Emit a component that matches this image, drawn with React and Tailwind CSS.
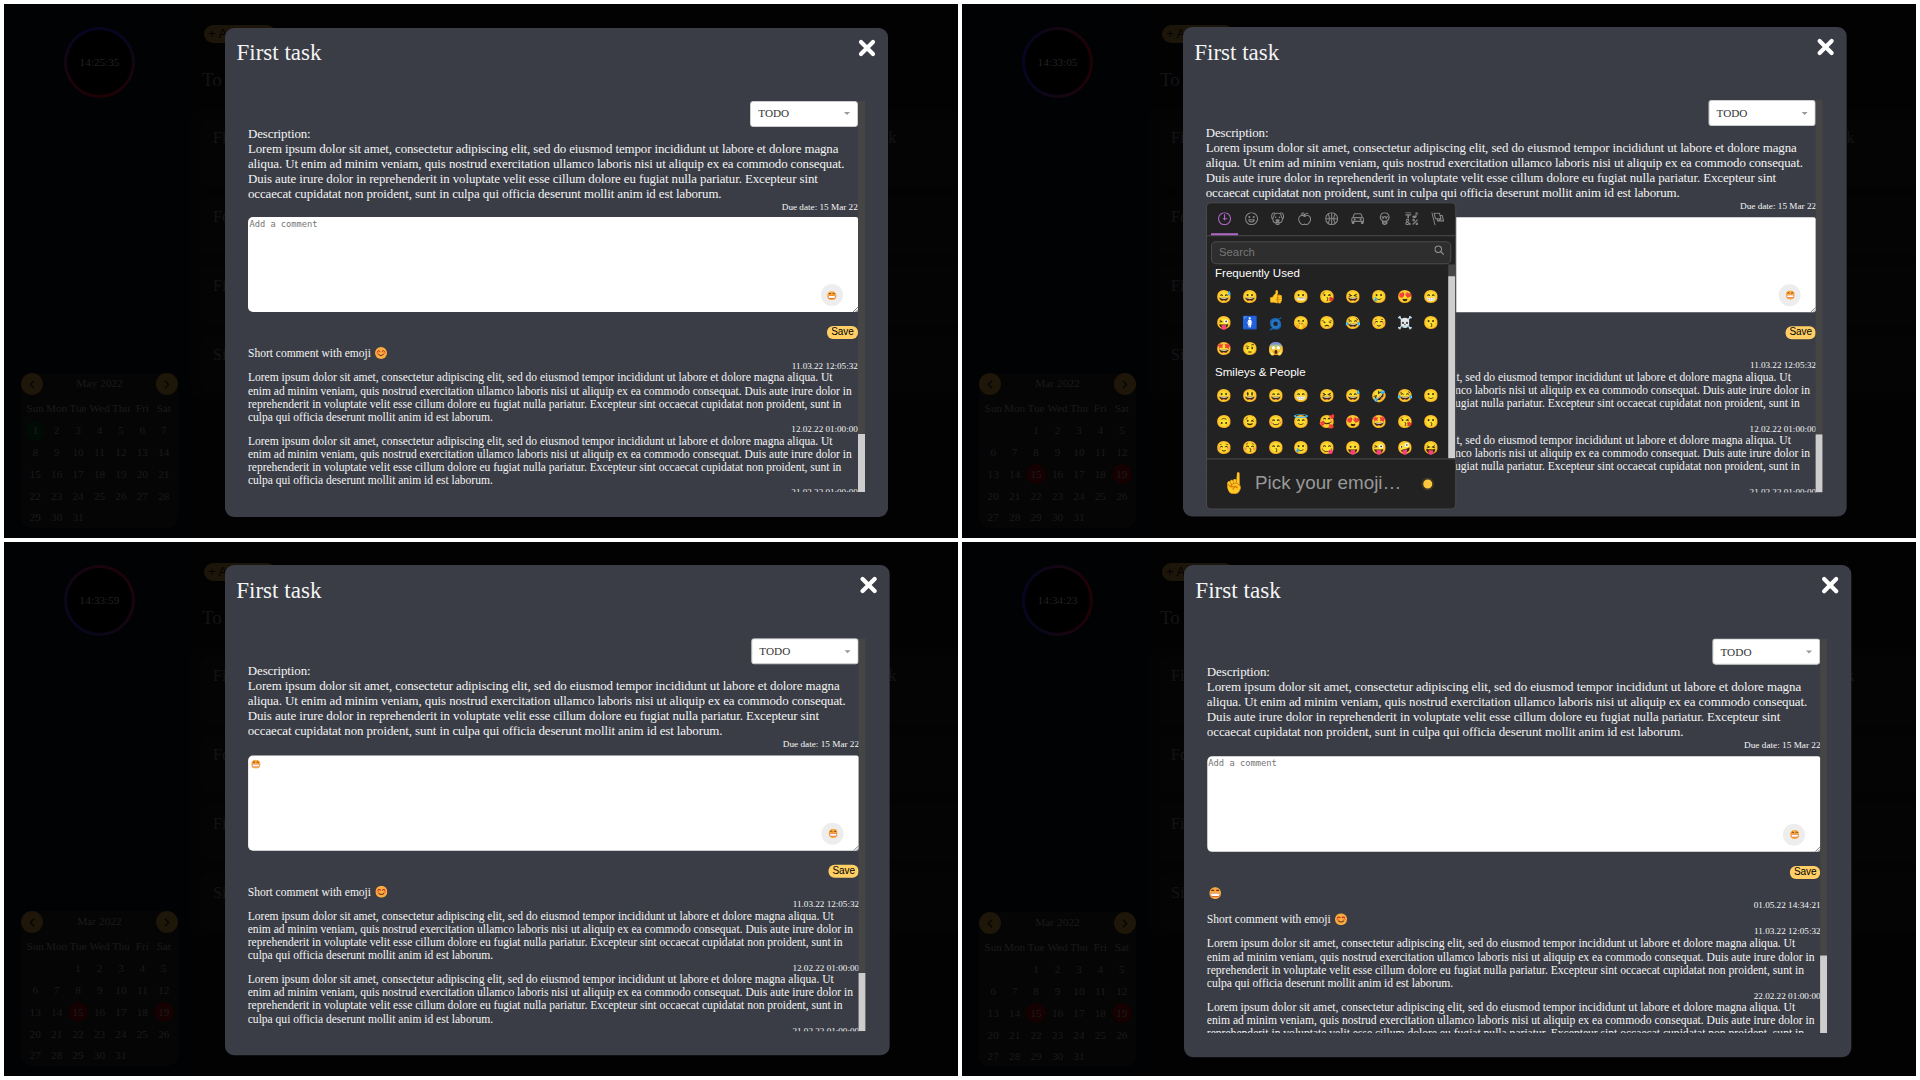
const LOREM_WIDE = `Lorem ipsum dolor sit amet, consectetur adipiscing elit, sed do eiusmod tempor incididunt ut labore et dolore magna
aliqua. Ut enim ad minim veniam, quis nostrud exercitation ullamco laboris nisi ut aliquip ex ea commodo consequat.
Duis aute irure dolor in reprehenderit in voluptate velit esse cillum dolore eu fugiat nulla pariatur. Excepteur sint
occaecat cupidatat non proident, sunt in culpa qui officia deserunt mollit anim id est laborum.`;

const LOREM_SMALL = `Lorem ipsum dolor sit amet, consectetur adipiscing elit, sed do eiusmod tempor incididunt ut labore et dolore magna aliqua. Ut
enim ad minim veniam, quis nostrud exercitation ullamco laboris nisi ut aliquip ex ea commodo consequat. Duis aute irure dolor in
reprehenderit in voluptate velit esse cillum dolore eu fugiat nulla pariatur. Excepteur sint occaecat cupidatat non proident, sunt in
culpa qui officia deserunt mollit anim id est laborum.`;

const FREQUENT = ["😅", "😀", "👍", "😬", "😘", "😆", "🥲", "😍", "😁", "😜", "🚺", "🌀", "🤫", "😒", "😂", "☺️", "☠️", "😗", "🤩", "🤨", "😱"];
const SMILEYS = ["😀", "😃", "😄", "😁", "😆", "😅", "🤣", "😂", "🙂", "🙃", "😉", "😊", "😇", "🥰", "😍", "🤩", "😘", "😗", "☺️", "😚", "😙", "🥲", "😋", "😛", "😜", "🤪", "😝"];

const TAB_ICONS = [
  ["M13 4h-2l-.001 7H9v2h2v2h2v-2h4v-2h-4z", "M12 0C5.373 0 0 5.373 0 12s5.373 12 12 12 12-5.373 12-12S18.627 0 12 0m0 22C6.486 22 2 17.514 2 12S6.486 2 12 2s10 4.486 10 10-4.486 10-10 10"],
  ["M12 0C5.373 0 0 5.373 0 12s5.373 12 12 12 12-5.373 12-12S18.627 0 12 0m0 22C6.486 22 2 17.514 2 12S6.486 2 12 2s10 4.486 10 10-4.486 10-10 10", "M8 7a2 2 0 1 0-.001 3.999A2 2 0 0 0 8 7M16 7a2 2 0 1 0-.001 3.999A2 2 0 0 0 16 7M15.232 15c-.693 1.195-1.87 2-3.349 2-1.477 0-2.655-.805-3.347-2H15m3-2H6a6 6 0 1 0 12 0"],
  ["M15.5 8a1.5 1.5 0 1 0 .001 3.001A1.5 1.5 0 0 0 15.5 8M8.5 8a1.5 1.5 0 1 0 .001 3.001A1.5 1.5 0 0 0 8.5 8", "M18.933 0h-.027c-.97 0-2.138.787-3.018 1.497-1.274-.374-2.612-.51-3.887-.51-1.285 0-2.616.133-3.874.517C7.245.79 6.069 0 5.093 0h-.027C3.352 0 .07 2.67.002 7.026c-.039 2.479.276 4.238 1.04 5.013.254.258.882.677 1.295.882.191 3.177.922 5.238 2.536 6.38.897.637 2.187.949 3.2 1.102C8.04 20.6 8 20.795 8 21c0 1.773 2.35 3 4 3 1.648 0 4-1.227 4-3 0-.201-.038-.393-.072-.586 2.573-.385 5.435-1.877 5.925-7.587.396-.22.887-.568 1.104-.788.763-.774 1.079-2.534 1.04-5.013C23.929 2.67 20.646 0 18.933 0M3.223 9.135c-.237.281-.837 1.155-.884 1.238-.15-.41-.368-1.349-.337-3.291.051-3.281 2.478-4.972 3.091-5.031.256.015.731.27 1.265.646-1.11 1.171-2.275 2.915-2.352 5.125-.133.546-.398.858-.783 1.313M12 22c-.901 0-1.954-.693-2-1 0-.654.475-1.236 1-1.602V20a1 1 0 1 0 2 0v-.602c.524.365 1 .947 1 1.602-.046.307-1.099 1-2 1m3-3.48v.02a4.752 4.752 0 0 0-1.262-1.02c1.092-.516 2.239-1.334 2.239-2.217 0-1.842-1.781-2.195-3.977-2.195-2.196 0-3.978.354-3.978 2.195 0 .883 1.148 1.701 2.238 2.217A4.8 4.8 0 0 0 9 18.539v-.025c-1-.076-2.182-.281-2.973-.842-1.301-.92-1.838-3.045-1.853-6.478l.023-.041c.496-.826 1.49-1.45 1.804-3.102 0-2.047 1.357-3.631 2.362-4.522C9.37 3.178 10.555 3 11.948 3c1.447 0 2.685.192 3.733.57 1 .9 2.316 2.465 2.316 4.48.313 1.651 1.307 2.275 1.803 3.102.035.058.068.117.102.178-.059 5.967-1.949 7.01-4.902 7.19m6.628-8.202c-.037-.065-.074-.13-.113-.195a7.587 7.587 0 0 0-.739-.987c-.385-.455-.648-.768-.782-1.313-.076-2.209-1.241-3.954-2.353-5.124.531-.376 1.004-.63 1.261-.647.636.071 3.044 1.764 3.096 5.031.027 1.81-.347 3.218-.37 3.235"],
  ["M17 4.978c-1.838 0-2.876.396-3.68.934.513-1.172 1.768-2.934 4.68-2.934a1 1 0 0 0 0-2c-2.921 0-4.629 1.365-5.547 2.512-.064.078-.119.162-.18.244C11.73 1.838 10.798.023 9.207.023 8.579.022 7.85.306 7 .978 5.027 2.54 5.329 3.902 6.492 4.999 3.609 5.222 0 7.352 0 12.969c0 4.582 4.961 11.009 9 11.009 1.975 0 2.371-.486 3-1 .629.514 1.025 1 3 1 4.039 0 9-6.418 9-11 0-5.953-4.055-8-7-8M8.242 2.546c.641-.508.943-.523.965-.523.426.169.975 1.405 1.357 3.055-1.527-.629-2.741-1.352-2.98-1.846.059-.112.241-.356.658-.686M15 21.978c-1.08 0-1.21-.109-1.559-.402l-.176-.146c-.367-.302-.816-.452-1.266-.452s-.898.15-1.266.452l-.176.146c-.347.292-.477.402-1.557.402-2.813 0-7-5.389-7-9.009 0-5.823 4.488-5.991 5-5.991 1.939 0 2.484.471 3.387 1.251l.323.276a1.995 1.995 0 0 0 2.58 0l.323-.276c.902-.78 1.447-1.251 3.387-1.251.512 0 5 .168 5 6 0 3.617-4.187 9-7 9"],
  ["M12 0C5.373 0 0 5.373 0 12s5.373 12 12 12 12-5.373 12-12S18.627 0 12 0m9.949 11H17.05c.224-2.527 1.232-4.773 1.968-6.113A9.966 9.966 0 0 1 21.949 11M13 11V2.051a9.945 9.945 0 0 1 4.432 1.564c-.858 1.491-2.156 4.22-2.392 7.385H13zm-2 0H8.961c-.238-3.165-1.536-5.894-2.393-7.385A9.95 9.95 0 0 1 11 2.051V11zm0 2v8.949a9.937 9.937 0 0 1-4.432-1.564c.857-1.492 2.155-4.221 2.393-7.385H11zm4.04 0c.236 3.164 1.534 5.893 2.392 7.385A9.92 9.92 0 0 1 13 21.949V13h2.04zM4.982 4.887C5.718 6.227 6.726 8.473 6.951 11h-4.9a9.977 9.977 0 0 1 2.931-6.113M2.051 13h4.9c-.226 2.527-1.233 4.771-1.969 6.113A9.972 9.972 0 0 1 2.051 13m16.967 6.113c-.735-1.342-1.744-3.586-1.968-6.113h4.899a9.961 9.961 0 0 1-2.931 6.113"],
  ["M6.5 11.5a2 2 0 1 0 0 4 2 2 0 0 0 0-4M17.5 11.5a2 2 0 1 0 0 4 2 2 0 0 0 0-4", "M21.5 9.2 19.6 3.8C19.2 2.7 18.2 2 17 2H7C5.800 2 4.800 2.700 4.400 3.800L2.500 9.200C1 9.700 0 11 0 12.500V18h1v2.500a1.500 1.500 0 0 0 1.500 1.500h2A1.500 1.500 0 0 0 6 20.500V18h12v2.500a1.500 1.500 0 0 0 1.500 1.500h2a1.500 1.500 0 0 0 1.500-1.500V18h1v-5.500c0-1.500-1-2.800-2.500-3.300M6.300 4.500C6.400 4.200 6.700 4 7 4h10c.3 0 .6.200.7.500L19.200 9H4.800zM22 16H2v-3.500C2 11.700 2.700 11 3.500 11h17c.8 0 1.500.7 1.500 1.500z"],
  ["M12 0a9 9 0 0 0-5 16.482V21s2.035 3 5 3 5-3 5-3v-4.518A9 9 0 0 0 12 0zm0 2c3.86 0 7 3.141 7 7s-3.14 7-7 7-7-3.141-7-7 3.14-7 7-7zM9 17.477c.94.332 1.946.523 3 .523s2.06-.19 3-.523v.834c-.91.436-1.925.689-3 .689a6.924 6.924 0 0 1-3-.69v-.833zm.236 3.07A8.854 8.854 0 0 0 12 21c.965 0 1.888-.167 2.758-.451C14.155 21.173 13.153 22 12 22c-1.102 0-2.117-.789-2.764-1.453z", "M14.745 12.449h-.004c-.852-.024-1.188-.858-1.577-1.824-.421-1.061-.703-1.561-1.182-1.566h-.009c-.481 0-.783.497-1.235 1.537-.436.982-.801 1.811-1.636 1.791l-.276-.043c-.565-.171-.853-.691-1.284-1.794-.125-.313-.202-.632-.27-.913-.051-.213-.127-.53-.195-.634C7.067 9.004 7.039 9 6.99 9A1 1 0 0 1 7 7h.01c1.662.017 2.015 1.373 2.198 2.134.486-.981 1.304-2.058 2.797-2.075 1.531.018 2.28 1.153 2.731 2.141l.002-.008C14.944 8.424 15.327 7 16.979 7h.032A1 1 0 1 1 17 9h-.011c-.149.076-.256.474-.319.709a6.484 6.484 0 0 1-.311.951c-.429.973-.79 1.789-1.614 1.789"],
  ["M0 0h11v2H0zM4 11h3V6h4V4H0v2h4zM15.5 17c1.381 0 2.5-1.116 2.5-2.493s-1.119-2.493-2.5-2.493S13 13.13 13 14.507 14.119 17 15.5 17m0-2.986c.276 0 .5.222.5.493 0 .272-.224.493-.5.493s-.5-.221-.5-.493.224-.493.5-.493M21.5 19.014c-1.381 0-2.5 1.116-2.5 2.493S20.119 24 21.5 24s2.5-1.116 2.5-2.493-1.119-2.493-2.5-2.493m0 2.986a.497.497 0 0 1-.5-.493c0-.271.224-.493.5-.493s.5.222.5.493a.497.497 0 0 1-.5.493M22 13l-9 9 1.513 1.5 8.99-9.009zM17 11c2.209 0 4-1.119 4-2.5V2s.985-.161 1.498.949C23.01 4.055 23 6 23 6s1-1.119 1-3.135C24-.02 21 0 21 0h-2v6.347A5.853 5.853 0 0 0 17 6c-2.209 0-4 1.119-4 2.5s1.791 2.5 4 2.5M10.297 20.482l-1.475-1.585a47.54 47.54 0 0 1-1.442 1.129c-.307-.288-.989-1.016-2.045-2.183.902-.836 1.479-1.466 1.729-1.892s.376-.871.376-1.336c0-.592-.273-1.178-.818-1.759-.546-.581-1.329-.871-2.349-.871-1.008 0-1.79.293-2.344.879-.556.587-.832 1.181-.832 1.784 0 .813.419 1.748 1.256 2.805-.847.614-1.444 1.208-1.794 1.784a3.465 3.465 0 0 0-.523 1.833c0 .857.308 1.56.924 2.107.616.549 1.423.823 2.42.823 1.173 0 2.444-.379 3.813-1.137L8.235 24h2.819l-2.09-2.383 1.333-1.135zm-6.736-6.389a1.02 1.02 0 0 1 .73-.286c.31 0 .559.085.747.254a.849.849 0 0 1 .283.659c0 .518-.419 1.112-1.257 1.784-.536-.651-.805-1.231-.805-1.742a.901.901 0 0 1 .302-.669M3.74 22c-.427 0-.778-.116-1.057-.349-.279-.232-.418-.487-.418-.766 0-.594.509-1.288 1.527-2.083.968 1.134 1.717 1.946 2.248 2.438-.921.507-1.686.76-2.3.76"],
  ["M0 0l6.084 24H8L1.916 0zM21 5h-4l-1-4H4l3 12h3l1 4h13L21 5zM6.563 3h7.875l2 8H8.563l-2-8zm8.832 10l-2.856 1.904L12.063 13h3.332zM19 13l-1.5-6h1.938l2 8H16l3-2z"],
];

function BlushFace({ className }) {
  return (
    <svg viewBox="0 0 24 24" className={className}>
      <circle cx="12" cy="12" r="12" fill="#fbac40" />
      <circle cx="5" cy="12" r="2.400" fill="#f37a3f" />
      <circle cx="19" cy="12" r="2.400" fill="#f37a3f" />
      <path d="M4.500 9.500q3-4.500 6 0M13.500 9.500q3-4.500 6 0" stroke="#b3241c" strokeWidth="2" fill="none" />
      <path d="M6.500 14.500q5.500 6 11 0" stroke="#6b3415" strokeWidth="2" fill="none" />
    </svg>
  );
}

function GrinFace({ className }) {
  return (
    <svg viewBox="0 0 24 24" className={className}>
      <rect x="0.500" y="0.500" width="23" height="23" rx="10.500" fill="#fbaa40" />
      <path d="M4.500 7.500q2.700-3 5.400 0M14.100 7.500q2.700-3 5.400 0" stroke="#6b3415" strokeWidth="2.400" fill="none" />
      <rect x="3.200" y="11.800" width="17.600" height="7.400" rx="3.200" fill="#d4503a" />
      <rect x="3.600" y="12.900" width="16.800" height="5" rx="2.500" fill="#fff" />
    </svg>
  );
}

function Cyclone() {
  return (
    <svg viewBox="0 0 24 24" className="size-[15px]" fill="none" strokeLinecap="round">
      <circle cx="12" cy="12" r="6" stroke="#2478c8" strokeWidth="4.600" />
      <path d="M5 14C2.500 7.500 6 3.500 12.500 3.800M19 10c2.500 6.500-1 10.500-7.500 10.200" stroke="#1966b8" strokeWidth="2.400" />
      <path d="M14 4.200q4 .8 6.500-1.700M10 19.800q-4-.8-6.500 1.700" stroke="#1966b8" strokeWidth="2" />
    </svg>
  );
}

function Clock({ time, ring }) {
  return (
    <div className={`ml-[60px] mt-[22.500px] size-[71px] rounded-full p-[3px] ${ring}`}>
      <div className="flex size-full items-center justify-center rounded-full bg-black text-[11.2px] text-[#222223]">{time}</div>
    </div>
  );
}

function Calendar({ title, blanks, marks, markClass, shift }) {
  const cells = [...Array(blanks).fill(""), ...Array.from({ length: 31 }, (_, i) => i + 1)];
  return (
    <div className={`ml-[17px] h-[155px] w-[157px] rounded-[11px] bg-[#050505] text-[11.200px] text-[#1b1b1b] ${shift}`}>
      <div className="flex h-[22px] items-center justify-between text-[11.4px]">
        {["M14.500 6 8.500 12l6 6", "M9.500 6l6 6-6 6"].map((d, i) => (
          <div key={d} className={`flex size-[22px] items-center justify-center rounded-full bg-[#1d1609] ${i ? "order-3" : "order-1"}`}>
            <svg viewBox="0 0 24 24" className="size-[15px]" fill="none" stroke="#060502" strokeWidth="2"><path d={d} /></svg>
          </div>
        ))}
        <span className="order-2">{title}</span>
      </div>
      <div className="ml-[3.500px] grid w-[150px] grid-cols-7">
        {["Sun", "Mon", "Tue", "Wed", "Thu", "Fri", "Sat"].map((d) => (
          <div key={d} className="flex h-[25px] items-center justify-center pt-[2px]">{d}</div>
        ))}
        {cells.map((c, i) => (
          <div key={i} className="flex h-[21.700px] items-center justify-center">
            <span className={`flex size-[20px] items-center justify-center rounded-full ${marks.includes(c) ? markClass : ""}`}>{c}</span>
          </div>
        ))}
      </div>
    </div>
  );
}

function Backdrop({ time, ring, calendar }) {
  return (
    <div className="flex h-full w-full">
      <div className="flex w-[186px] shrink-0 flex-col justify-between bg-[#010204]">
        <Clock time={time} ring={ring} />
        <div className="pb-[10px]"><Calendar {...calendar} /></div>
      </div>
      <div className="flex grow flex-col bg-[#020203] text-[#141414]">
        <div className="ml-[14px] mt-[20.500px] h-[18px] w-[72px] rounded-full bg-[#1c160a] pl-[4px] font-['Liberation_Sans'] text-[13px] leading-[17px] text-[#030302]">+ Add task</div>
        <div className="ml-[12px] mt-[26px] text-[19px] leading-[22px]">To Do</div>
        <div className="mt-[18px] flex h-[290px] flex-col rounded-[8px] bg-[#030303] pl-[11px] pt-[10px] text-[16px] leading-[20px]">
          {["First task", "Fourth task", "Fifth task", "Sixth task"].map((t, i) => (
            <div key={t} className={`mb-[12px] flex shrink-0 justify-between rounded-l-[6px] bg-[#040404] pl-[12px] pr-[61.500px] pt-[9.500px] ${i ? "h-[56.700px]" : "h-[67.300px]"}`}>
              <span>{t}</span>
              {i === 0 && <span>task</span>}
            </div>
          ))}
        </div>
      </div>
    </div>
  );
}

function Comment({ text, date, emoji }) {
  return (
    <div>
      {emoji ? (
        <div className="flex h-[15.600px] items-center text-[11.500px] leading-[15.600px]">
          {text && <span className="mr-[4.500px] mt-[2px]">{text}</span>}
          {emoji === "blush" ? <BlushFace className="size-[12px]" /> : <GrinFace className="ml-[2px] size-[12px]" />}
        </div>
      ) : (
        <div className="whitespace-pre text-[11.550px] leading-[13.200px] tracking-[-0.018px]">{text}</div>
      )}
      <div className="h-[10.400px] text-right text-[9.100px] leading-[10.400px]">{date}</div>
    </div>
  );
}

function EmojiGrid({ items }) {
  return (
    <div className="grid w-[233px] grid-cols-9">
      {items.map((e, i) => (
        <span key={i} className="flex h-[26px] items-center justify-center font-['Noto_Color_Emoji'] text-[12.700px] leading-none">{e === "🌀" ? <Cyclone /> : e}</span>
      ))}
    </div>
  );
}

function EmojiPicker() {
  return (
    <div className="absolute left-[23px] top-[175px] flex h-[306.500px] w-[250px] flex-col rounded-[5px] border border-[#4b4b4c] bg-[#222] font-['Liberation_Sans']">
      <div className="flex h-[33px] shrink-0 border-b border-[#4b4b4c] px-[4px]">
        {TAB_ICONS.map((paths, i) => (
          <div key={i} className={`flex grow basis-0 items-center justify-center pb-[1px] ${i ? "text-[#858585]" : "border-b-2 border-[#ae65c5] pt-[2px] text-[#ae65c5]"}`}>
            <svg viewBox="0 0 24 24" className="size-[13px]" fill="currentColor">{paths.map((d) => <path key={d} d={d} />)}</svg>
          </div>
        ))}
      </div>
      <div className="mx-[4px] mt-[5px] flex h-[22.500px] shrink-0 justify-between rounded-[5px] border border-[#4b4b4c] bg-[#2e2e2e] pl-[7px] pr-[6px] text-[11.300px] leading-[21px] text-[#777]">
        <span>Search</span>
        <svg viewBox="0 0 20 20" className="mt-[2.500px] size-[10px]" fill="none" stroke="#999" strokeWidth="2"><circle cx="8" cy="8" r="6.500" /><path d="m13 13 6 6" /></svg>
      </div>
      <div className="flex h-[194px] shrink-0 justify-between overflow-hidden pl-[4px]">
        <div className="text-[11.550px] text-white">
          <div className="h-[21px] pl-[4px] pt-[1.500px] leading-[17px]">Frequently Used</div>
          <EmojiGrid items={FREQUENT} />
          <div className="h-[20.700px] pl-[4px] leading-[18px]">Smileys &amp; People</div>
          <EmojiGrid items={SMILEYS} />
        </div>
        <div className="w-[7px] bg-[#474747] pt-[12px]"><div className="h-full bg-[#cfcfcf]" /></div>
      </div>
      <div className="flex grow items-center border-t border-[#4b4b4c] pl-[15.500px] text-[18.800px] text-[#999]">
        <span className="w-[32.500px] font-['Noto_Color_Emoji'] text-[20px]">☝️</span>
        <span className="w-[166px]">Pick your emoji…</span>
        <span className="size-[13px] rounded-full border-2 border-[#3c3826] bg-[#ffc83d]" />
      </div>
    </div>
  );
}

function TaskModal({ place, value, comments, thumb, picker }) {
  return (
    <div className={`absolute h-[489px] w-[662.500px] origin-top-left rounded-[9px] bg-[#3a3d46] text-[#f4f4f4] ${place}`}>
      <div className="flex h-[73px] items-start justify-between pl-[11.200px] pr-[11.500px] pt-[11px]">
        <h1 className="mt-[0.700px] text-[23px] leading-[28px]">First task</h1>
        <svg viewBox="0 0 18 18" className="size-[18px]" stroke="#fff" strokeWidth="4.200" strokeLinecap="round"><path d="M3 3l12 12M15 3 3 15" /></svg>
      </div>
      <div className="ml-[22.700px] flex h-[391.500px] w-[616.800px] overflow-hidden">
        <div className="w-[609.800px]">
          <div className="ml-auto flex h-[26px] w-[107.500px] items-center justify-between rounded-[3px] border border-[#ccc] bg-white pl-[7px] pr-[7px] text-[11.200px] text-[#333]">
            TODO
            <span className="border-x-[3.500px] border-t-[3.500px] border-x-transparent border-t-[#999]" />
          </div>
          <div className="text-[12.900px] leading-[15px] tracking-[-0.093px]">
            <div>Description:</div>
            <div className="whitespace-pre">{LOREM_WIDE}</div>
          </div>
          <div className="h-[15.700px] text-right text-[9.200px] leading-[10px]">Due date: 15 Mar 22</div>
          <div className="relative h-[95px] rounded-l-[5px] rounded-r-[2px] bg-white pl-[1.500px] pt-[2px] font-['DejaVu_Sans_Mono'] text-[8.700px] leading-[11px] text-[#757575]">
            {value ? <GrinFace className="ml-[2px] mt-[2px] size-[9.500px]" /> : "Add a comment"}
            <div className="absolute bottom-[6px] right-[15px] flex size-[22px] items-center justify-center rounded-full bg-[#ededee]"><GrinFace className="mt-[1px] size-[9.500px]" /></div>
            <svg viewBox="0 0 6 6" className="absolute bottom-0 right-0 size-[5px]" stroke="#555" strokeWidth="0.900"><path d="M0 6 6 0M3 6l3-3" /></svg>
          </div>
          <div className="ml-auto mt-[14px] h-[13px] w-[30.700px] rounded-[6px] bg-[#ffcf66] text-center font-['Liberation_Sans'] text-[10px] leading-[12.500px] tracking-[-0.1px] text-black">Save</div>
          <div className="pt-[6.200px]">
            {comments.map((c) => <Comment key={c.date} {...c} />)}
          </div>
        </div>
        <div className="flex w-[7px] flex-col justify-end bg-[#454546]"><div className={`bg-[#cdcdcd] ${thumb}`} /></div>
      </div>
      {picker && <EmojiPicker />}
    </div>
  );
}

const SHORT = { text: "Short comment with emoji", emoji: "blush", date: "11.03.22 12:05:32" };
const BASE_COMMENTS = [SHORT, { text: LOREM_SMALL, date: "12.02.22 01:00:00" }, { text: LOREM_SMALL, date: "21.02.22 01:00:00" }];
const NEW_COMMENTS = [{ emoji: "grin", date: "01.05.22 14:34:21" }, SHORT, { text: LOREM_SMALL, date: "22.02.22 01:00:00" }, { text: LOREM_SMALL, date: "21.02.22 01:00:00" }];

const MAY = { title: "May 2022", blanks: 0, marks: [1], markClass: "bg-[#010b05]", shift: "" };
const MARCH = { title: "Mar 2022", blanks: 2, marks: [15, 19], markClass: "bg-[#160102]", shift: "" };

const SCREENS = [
  { time: "14:25:35", ring: "bg-linear-to-b from-[#050522] to-[#200104]", calendar: MAY, place: "left-[221.300px] top-[23.500px]", comments: BASE_COMMENTS, thumb: "h-[58px]" },
  { time: "14:33:05", ring: "bg-linear-to-r from-[#050522] to-[#200104]", calendar: MARCH, place: "left-[221.400px] top-[23.100px] scale-[1.001]", comments: BASE_COMMENTS, thumb: "h-[58px]", picker: true },
  { time: "14:33:59", ring: "bg-linear-to-tr from-[#050522] to-[#200104]", calendar: MARCH, place: "left-[221.400px] top-[23.400px] scale-[1.0025]", value: true, comments: BASE_COMMENTS, thumb: "h-[58px]" },
  { time: "14:34:23", ring: "bg-linear-to-r from-[#050522] to-[#200104]", calendar: { ...MARCH, shift: "relative top-[1px]" }, place: "left-[222.200px] top-[23.300px] scale-[1.0065]", comments: NEW_COMMENTS, thumb: "h-[76.500px]" },
];

export default function App() {
  return (
    <div className="grid h-[1080px] w-[1920px] grid-cols-[954px_954px] grid-rows-[534px_534px] gap-[4px] overflow-hidden bg-white p-[4px] font-['Liberation_Serif']">
      {SCREENS.map(({ time, ring, calendar, ...modal }) => (
        <div key={time} className="relative overflow-hidden">
          <Backdrop time={time} ring={ring} calendar={calendar} />
          <TaskModal {...modal} />
        </div>
      ))}
    </div>
  );
}
